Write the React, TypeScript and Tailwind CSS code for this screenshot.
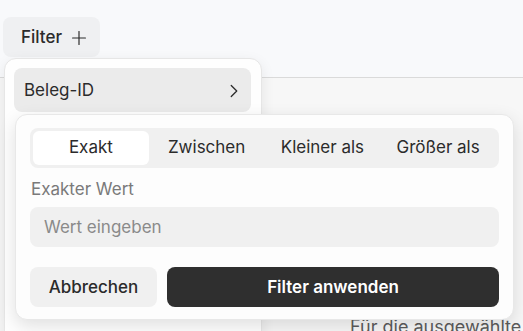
import { useState } from 'react'
import { ChevronRight, Plus } from 'lucide-react'

const modes = ['Exakt', 'Zwischen', 'Kleiner als', 'Größer als']

export default function App() {
  const [mode, setMode] = useState('Exakt')
  const [value, setValue] = useState('')

  return (
    <div
      className="relative w-[523px] h-[331px] overflow-hidden bg-[#f7f7f7] text-[#2b2b2b]"
      style={{ fontFamily: 'Inter, "Noto Sans", sans-serif' }}
    >
      {/* page header with the filter trigger */}
      <div className="h-[78px] bg-[#f8f9fb] border-b border-[#dadada] pt-[17px] pl-[3px]">
        <button className="flex items-center gap-[6px] h-[40px] pl-[18px] pr-[10px] pt-[1px] rounded-lg bg-[#eff0f2] text-[17px] font-medium">
          Filter
          <Plus className="w-[22px] h-[22px]" strokeWidth={1.3} />
        </button>
      </div>

      <div className="pl-[350px] pt-[237px] text-[18px] leading-6 text-[#5c5c5c]">Für die ausgewählte</div>

      {/* first level menu */}
      <div className="absolute left-[4px] top-[58px] w-[258px] h-[320px] rounded-xl bg-[#fefefe] border border-[#e6e6e6] shadow-[0_4px_14px_rgba(0,0,0,0.08)] pt-[9px] pl-[9px] pr-[10px]">
        <div className="flex items-center justify-between h-[44px] pl-[10px] pr-[6px] pt-[1px] rounded-lg bg-[#ebebeb] text-[17px]">
          Beleg-ID
          <ChevronRight className="w-[22px] h-[22px]" strokeWidth={1.4} />
        </div>
      </div>

      {/* sub popover */}
      <div className="absolute left-[15px] top-[114px] w-[499px] h-[206px] rounded-xl bg-[#fdfdfd] border border-[#e8e8e8] shadow-[0_6px_18px_rgba(0,0,0,0.12)] px-[14px] pt-[13px]">
        <div className="grid grid-cols-4 h-[40px] p-[3px] rounded-lg bg-[#f0f0f0]">
          {modes.map(m => (
            <button
              key={m}
              onClick={() => setMode(m)}
              className={
                mode === m
                  ? 'rounded-md bg-white text-[17px] text-[#2b2b2b]'
                  : 'rounded-md text-[17px] text-[#2b2b2b]'
              }
            >
              {m}
            </button>
          ))}
        </div>
        <div className="mt-[9px] text-[17px] leading-6 text-[#7a7a7a] pl-[1px]">Exakter Wert</div>
        <input
          value={value}
          onChange={e => setValue(e.target.value)}
          placeholder="Wert eingeben"
          className="mt-[6px] w-full h-[40px] px-[14px] rounded-lg bg-[#f0f0f0] text-[17px] outline-none placeholder:text-[#8a8a8a]"
        />
        <div className="flex gap-[10px] mt-[20px]">
          <button className="w-[127px] h-[40px] pt-[1px] rounded-lg bg-[#f0f0f0] text-[17px] font-medium">Abbrechen</button>
          <button className="flex-1 h-[40px] pt-[1px] rounded-lg bg-[#2f2f2f] text-white text-[17px] font-semibold">
            Filter anwenden
          </button>
        </div>
      </div>
    </div>
  )
}
